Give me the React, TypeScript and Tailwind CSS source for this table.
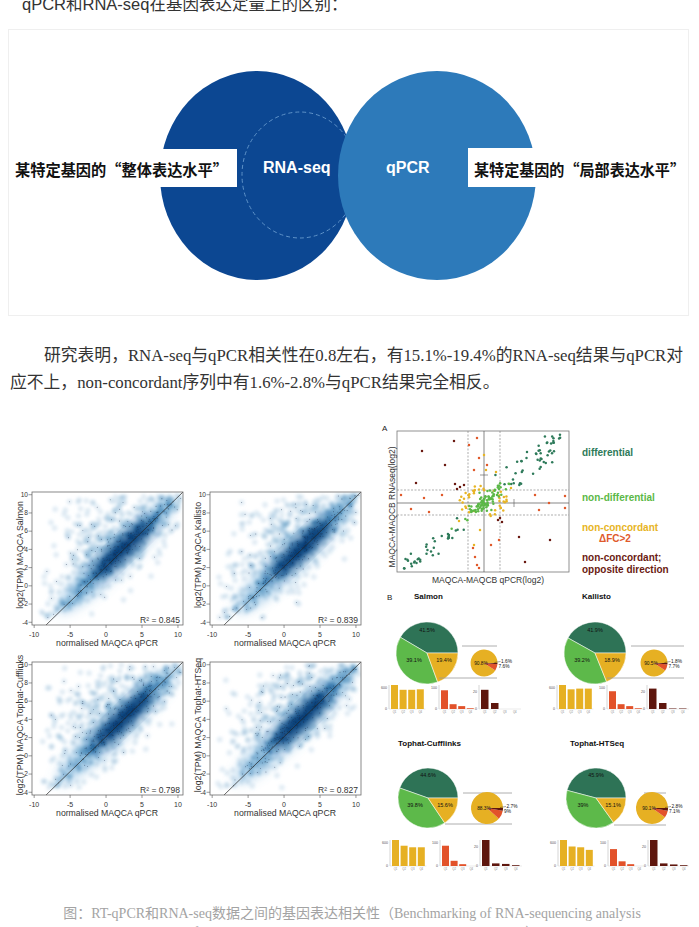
import React from 'react';

const SANS = "'Liberation Sans', Arial, sans-serif";
const CJK = "'Noto Sans CJK SC', sans-serif";

function rng(seed: number) {
  let s = seed >>> 0;
  return () => {
    s = (s + 0x6d2b79f5) >>> 0;
    let t = s;
    t = Math.imul(t ^ (t >>> 15), t | 1);
    t ^= t + Math.imul(t ^ (t >>> 7), t | 61);
    return ((t ^ (t >>> 14)) >>> 0) / 4294967296;
  };
}

function gauss(r: () => number) {
  const u = Math.max(r(), 1e-9);
  const v = r();
  return Math.sqrt(-2 * Math.log(u)) * Math.cos(2 * Math.PI * v);
}

// pie wedge, angles in degrees counter-clockwise from 3 o'clock
function wedge(cx: number, cy: number, r: number, a0: number, a1: number) {
  const k = Math.PI / 180;
  const x0 = cx + r * Math.cos(a0 * k);
  const y0 = cy - r * Math.sin(a0 * k);
  const x1 = cx + r * Math.cos(a1 * k);
  const y1 = cy - r * Math.sin(a1 * k);
  return `M${cx} ${cy}L${x0} ${y0}A${r} ${r} 0 ${a1 - a0 > 180 ? 1 : 0} 0 ${x1} ${y1}Z`;
}

function Diagram() {
  return (
    <svg width={679} height={285} viewBox="9 30 679 285" className="block">
      <ellipse cx={257} cy={175.5} rx={97} ry={104.5} fill="#0c4792" />
      <ellipse cx={300} cy={175} rx={58} ry={63} fill="none" stroke="#5f93c9" strokeWidth={1} strokeDasharray="4 3" />
      <ellipse cx={437} cy={175.5} rx={99} ry={104.5} fill="#2d7aba" />
      <rect x={9} y={149} width={228} height={38} fill="#ffffff" />
      <rect x={468} y={148} width={220} height={39} fill="#ffffff" />
      <text x={15} y={176} fontFamily={CJK} fontSize={15.6} fontWeight={700} fill="#111111" textLength={213} lengthAdjust="spacingAndGlyphs">
        某特定基因的“整体表达水平”
      </text>
      <text x={474} y={176} fontFamily={CJK} fontSize={15.6} fontWeight={700} fill="#111111" textLength={211} lengthAdjust="spacingAndGlyphs">
        某特定基因的“局部表达水平”
      </text>
      <text x={263} y={173} fontFamily={SANS} fontSize={16} fontWeight={700} fill="#ffffff">
        RNA-seq
      </text>
      <text x={386} y={173} fontFamily={SANS} fontSize={16} fontWeight={700} fill="#ffffff">
        qPCR
      </text>
    </svg>
  );
}

function DensityPlot({ id, ylabel, r2, seed }: { id: string; ylabel: string; r2: string; seed: number }) {
  const pts = React.useMemo(() => {
    const r = rng(seed);
    const out: [number, number][] = [];
    while (out.length < 1500) {
      const t = Math.min(1.02, Math.max(-0.02, 0.57 + gauss(r) * 0.2));
      let x = 35 + t * 138 + gauss(r) * 4.5;
      let y = 144 - t * 134 + gauss(r) * 4.5;
      const u = r();
      if (u < 0.24) {
        const s = Math.abs(gauss(r)) * 26;
        x -= s * 0.7;
        y -= s * 0.72;
      } else if (u < 0.34) {
        const s = Math.abs(gauss(r)) * 13;
        x += s * 0.7;
        y += s * 0.72;
      }
      if (y > 137) y = 130 + r() * 8;
      if (x < 30 || x > 171 || y < 15) continue;
      out.push([x, y]);
    }
    return out;
  }, [seed]);

  const yTicks = [10, 8, 6, 4, 2, 0, -2, -4];
  const xTicks = [-10, -5, 0, 5, 10];
  const py = (v: number) => 145 - ((v + 4.3) / 14.6) * 133;
  const px = (v: number) => 22 + ((v + 10.3) / 21) * 151;

  return (
    <svg width={178} height={170} className="block">
      <defs>
        <clipPath id={id}>
          <rect x={22} y={12} width={151} height={133} />
        </clipPath>
        <filter id={id + 'b'} x="-10%" y="-10%" width="120%" height="120%">
          <feGaussianBlur stdDeviation={1.2} />
        </filter>
        <filter id={id + 'c'} x="-50%" y="-50%" width="200%" height="200%">
          <feGaussianBlur stdDeviation={6} />
        </filter>
      </defs>
      <g clipPath={`url(#${id})`}>
        <g filter={`url(#${id}c)`} transform="translate(106 76) rotate(-44)">
          <ellipse cx={0} cy={0} rx={80} ry={15} fill="#5a9fd4" fillOpacity={0.5} />
        </g>
        <g filter={`url(#${id}b)`}>
          {pts.map((p, i) => (
            <circle key={'a' + i} cx={p[0]} cy={p[1]} r={4.2} fill="#bcd7ee" fillOpacity={0.1} />
          ))}
          {pts.map((p, i) => (
            <circle key={'b' + i} cx={p[0]} cy={p[1]} r={3} fill="#3182bd" fillOpacity={0.05} />
          ))}
          {pts.map((p, i) => (
            <circle key={'c' + i} cx={p[0]} cy={p[1]} r={2} fill="#08306b" fillOpacity={0.04} />
          ))}
        </g>
        <g filter={`url(#${id}c)`} transform="translate(113 69) rotate(-44)">
          <ellipse cx={0} cy={0} rx={40} ry={8} fill="#08306b" fillOpacity={0.8} />
        </g>
        {pts.filter((_, i) => i % 5 === 0).map((p, i) => (
          <circle key={'d' + i} cx={p[0]} cy={p[1]} r={0.45} fill="#1b2f4f" fillOpacity={0.75} />
        ))}
        <line x1={35} y1={146} x2={173} y2={12} stroke="#222222" strokeWidth={0.7} />
      </g>
      <rect x={22} y={12} width={151} height={133} fill="none" stroke="#6b6b6b" strokeWidth={0.8} />
      {yTicks.map(v => (
        <g key={v}>
          <line x1={18.5} x2={22} y1={py(v)} y2={py(v)} stroke="#555555" strokeWidth={0.6} />
          <text x={18} y={py(v) + 2.3} textAnchor="end" fontFamily={SANS} fontSize={6.6} fill="#333333">
            {v}
          </text>
        </g>
      ))}
      {xTicks.map(v => (
        <g key={v}>
          <line x1={px(v)} x2={px(v)} y1={145} y2={148} stroke="#555555" strokeWidth={0.6} />
          <text x={px(v)} y={156.5} textAnchor="middle" fontFamily={SANS} fontSize={7} fill="#333333">
            {v}
          </text>
        </g>
      ))}
      <text x={97} y={166} textAnchor="middle" fontFamily={SANS} fontSize={8.7} fill="#333333">
        normalised MAQCA qPCR
      </text>
      <text
        x={0}
        y={0}
        transform="translate(13 75) rotate(-90)"
        textAnchor="middle"
        fontFamily={SANS}
        fontSize={8.8}
        fill="#333333"
      >
        {ylabel}
      </text>
      <text x={170} y={143} textAnchor="end" fontFamily={SANS} fontSize={8.5} fill="#333333">
        {r2}
      </text>
    </svg>
  );
}

const ORANGE: [number, number][] = [
  [402, 495], [412, 509], [425, 498], [540, 510], [536, 495], [566, 496], [566, 508], [550, 503],
  [478, 438], [470, 445], [480, 458], [475, 470], [488, 465], [474, 548], [476, 557], [478, 565],
  [480, 568], [492, 545], [500, 540], [443, 495], [430, 512],
];
const BROWN: [number, number][] = [
  [423, 451], [455, 441], [446, 465], [417, 483], [456, 484], [461, 487], [465, 485], [458, 489],
  [499, 520], [503, 522], [501, 518], [520, 537], [551, 540], [526, 562],
];

function PanelA() {
  const groups = React.useMemo(() => {
    const r = rng(7);
    const diff: [number, number][] = [];
    for (let i = 0; i < 95; i++) {
      const up = i < 52;
      const t = (up ? 1 : -1) * (0.24 + r() * 0.78);
      const n = gauss(r) * (up ? 6 : 4.5);
      const x = 485 + t * 82 - n * 0.64;
      const y = 503 - t * 69 - n * 0.77;
      if (x < 401 || x > 567 || y < 434 || y > 569) continue;
      diff.push([x, y]);
    }
    const nd: [number, number][] = [];
    for (let i = 0; i < 85; i++) {
      const t = gauss(r) * 0.11;
      nd.push([486 + t * 82 + gauss(r) * 4, 502 - t * 69 + gauss(r) * 3.5]);
    }
    const yel: [number, number][] = [
      [485, 455], [487, 470], [475, 545], [481, 530], [460, 521], [497, 472], [512, 488],
    ];
    for (let i = 0; i < 42; i++) {
      const a = r() * Math.PI * 2;
      const rad = 0.75 + r() * 0.5;
      yel.push([485 + Math.cos(a) * 20 * rad, 502 + Math.sin(a) * 14 * rad]);
    }
    return { diff, nd, yel };
  }, []);

  return (
    <svg width={315} height={170} viewBox="375 415 315 170" className="block">
      <text x={383} y={431} fontFamily={SANS} fontSize={8} fill="#222222">A</text>
      <rect x={398} y={431} width={172} height={141} fill="none" stroke="#777777" strokeWidth={0.8} />
      <line x1={469} x2={469} y1={431} y2={572} stroke="#777777" strokeWidth={0.6} strokeDasharray="2 1.5" />
      <line x1={501} x2={501} y1={431} y2={572} stroke="#777777" strokeWidth={0.6} strokeDasharray="2 1.5" />
      <line x1={398} x2={570} y1={490} y2={490} stroke="#777777" strokeWidth={0.6} strokeDasharray="2 1.5" />
      <line x1={398} x2={570} y1={515} y2={515} stroke="#777777" strokeWidth={0.6} strokeDasharray="2 1.5" />
      <line x1={485} x2={485} y1={431} y2={572} stroke="#555555" strokeWidth={0.7} />
      <line x1={398} x2={570} y1={503} y2={503} stroke="#555555" strokeWidth={0.7} />
      <line x1={481} x2={489} y1={475} y2={475} stroke="#555555" strokeWidth={0.6} />
      <line x1={515} x2={515} y1={499} y2={507} stroke="#555555" strokeWidth={0.6} />
      {groups.diff.map((p, i) => (
        <circle key={'g' + i} cx={p[0]} cy={p[1]} r={1.25} fill="#2e7a5a" />
      ))}
      {groups.yel.map((p, i) => (
        <circle key={'y' + i} cx={p[0]} cy={p[1]} r={1.25} fill="#e7b424" />
      ))}
      {groups.nd.map((p, i) => (
        <circle key={'n' + i} cx={p[0]} cy={p[1]} r={1.25} fill="#5bb847" />
      ))}
      {ORANGE.map((p, i) => (
        <circle key={'o' + i} cx={p[0]} cy={p[1]} r={1.25} fill="#e05a2b" />
      ))}
      {BROWN.map((p, i) => (
        <circle key={'b' + i} cx={p[0]} cy={p[1]} r={1.25} fill="#6b1a12" />
      ))}
      <text
        transform="translate(395.5 507) rotate(-90)"
        textAnchor="middle"
        fontFamily={SANS}
        fontSize={8.5}
        fill="#333333"
      >
        MAQCA-MAQCB RNAseq(log2)
      </text>
      <text x={489} y={583} textAnchor="middle" fontFamily={SANS} fontSize={8.5} fill="#333333">
        MAQCA-MAQCB qPCR(log2)
      </text>
      <g fontFamily={SANS} fontSize={10} fontWeight={700}>
        <text x={583} y={455.5} fill="#2e7a5a">differential</text>
        <text x={583} y={500.5} fill="#5bb847">non-differential</text>
        <text x={583} y={531} fill="#e7b424">non-concordant</text>
        <text x={600} y={542} fill="#e05a2b">ΔFC&gt;2</text>
        <text x={583} y={561} fill="#6b1a12">non-concordant;</text>
        <text x={583} y={572.5} fill="#6b1a12">opposite direction</text>
      </g>
    </svg>
  );
}

type Group = {
  title: string;
  tx: number;
  ty: number;
  cx: number;
  cy: number;
  r: number;
  big: [number, number, number];
  small: [number, number, number];
  sx: number;
  sr: number;
  top: [number, number, number];
  bot: [number, number, number];
  barTop: number;
  barH: number;
  bars: [number[], number[], number[]];
};

const GROUPS: Group[] = [
  {
    title: 'Salmon', tx: 415, ty: 599, cx: 428, cy: 653, r: 31,
    big: [41.5, 39.1, 19.4], small: [90.8, 1.6, 7.6], sx: 485, sr: 13.5,
    top: [463, 498, 646], bot: [440, 498, 678], barTop: 685, barH: 24,
    bars: [[1, 0.8, 0.8, 0.82], [0.78, 0.2, 0.12, 0.03], [0.8, 0.25, 0, 0]],
  },
  {
    title: 'Kallisto', tx: 583, ty: 599, cx: 596, cy: 653, r: 31,
    big: [41.9, 39.2, 18.9], small: [90.5, 1.8, 7.7], sx: 655, sr: 13.5,
    top: [632, 685, 646], bot: [608, 685, 678], barTop: 685, barH: 24,
    bars: [[1, 0.82, 0.85, 0.85], [0.74, 0.2, 0.12, 0.03], [0.85, 0.25, 0.02, 0.02]],
  },
  {
    title: 'Tophat-Cufflinks', tx: 399, ty: 746, cx: 429, cy: 798, r: 30,
    big: [44.6, 39.8, 15.6], small: [88.3, 2.7, 9], sx: 488, sr: 16,
    top: [464, 513, 793], bot: [446, 513, 824], barTop: 840, barH: 26,
    bars: [[1, 0.78, 0.72, 0.72], [0.78, 0.2, 0.07, 0], [1, 0.1, 0.08, 0.03]],
  },
  {
    title: 'Tophat-HTSeq', tx: 571, ty: 746, cx: 597, cy: 798, r: 30,
    big: [45.9, 39, 15.1], small: [90.1, 2.8, 7.1], sx: 653, sr: 16,
    top: [645, 667, 793], bot: [615, 667, 825], barTop: 840, barH: 26,
    bars: [[1, 0.75, 0.72, 0.62], [0.65, 0.18, 0.07, 0], [1, 0.1, 0.06, 0.03]],
  },
];

const BAR_COLORS = ['#e6b023', '#e2522a', '#5e160d'];
const BAR_TICKS = ['600', '100', '20'];

function PieGroup({ g }: { g: Group }) {
  const [d, l] = g.big;
  const a1 = d * 3.6;
  const a2 = (d + l) * 3.6;
  const [, dark, red] = g.small;
  const sy = g.cy + 10;
  const fmt = (v: number) => `${v}%`;
  const charts = [g.cx - 38, g.cx + 12, g.cx + 52];
  const bottom = g.barTop + g.barH;
  return (
    <g fontFamily={SANS}>
      <text x={g.tx} y={g.ty} fontSize={8} fontWeight={700} fill="#111111">{g.title}</text>
      <path d={wedge(g.cx, g.cy, g.r, 0, a1)} fill="#2e7356" stroke="#ffffff" strokeWidth={0.5} />
      <path d={wedge(g.cx, g.cy, g.r, a1, a2)} fill="#5db94a" stroke="#ffffff" strokeWidth={0.5} />
      <path d={wedge(g.cx, g.cy, g.r, a2, 360)} fill="#e6b023" stroke="#ffffff" strokeWidth={0.5} />
      <text x={g.cx} y={g.cy - 21} textAnchor="middle" fontSize={5.5} fill="#111111">{fmt(g.big[0])}</text>
      <text x={g.cx - 13} y={g.cy + 9} textAnchor="middle" fontSize={5.5} fill="#111111">{fmt(g.big[1])}</text>
      <text x={g.cx + 17} y={g.cy + 9} textAnchor="middle" fontSize={5.5} fill="#111111">{fmt(g.big[2])}</text>
      <line x1={g.top[0]} x2={g.top[1]} y1={g.top[2]} y2={g.top[2]} stroke="#9a9a9a" strokeWidth={0.8} />
      <line x1={g.bot[0]} x2={g.bot[1]} y1={g.bot[2]} y2={g.bot[2]} stroke="#9a9a9a" strokeWidth={0.8} />
      <path d={wedge(g.sx, sy, g.sr, 0, 360 - (dark + red) * 3.6)} fill="#e6b023" />
      <path d={wedge(g.sx, sy, g.sr, 360 - (dark + red) * 3.6, 360 - dark * 3.6)} fill="#e2522a" />
      <path d={wedge(g.sx, sy, g.sr, 360 - dark * 3.6, 359.9)} fill="#5e160d" />
      <text x={g.sx - 3} y={sy + 1.5} textAnchor="middle" fontSize={4.8} fill="#111111">{fmt(g.small[0])}</text>
      <line x1={g.sx + g.sr - 3} x2={g.sx + g.sr + 3} y1={sy - 0.5} y2={sy - 1.5} stroke="#111111" strokeWidth={0.4} />
      <text x={g.sx + g.sr + 3.5} y={sy} fontSize={4.8} fill="#111111">{fmt(dark)}</text>
      <text x={g.sx + g.sr + 1} y={sy + 5} fontSize={4.8} fill="#111111">{fmt(red)}</text>
      {charts.map((ax, ci) => {
        const w = ci === 2 ? 7.5 : 7;
        const gap = ci === 2 ? 2.5 : 1.6;
        return (
          <g key={ci}>
            <line x1={ax} x2={ax} y1={g.barTop} y2={bottom} stroke="#aaaaaa" strokeWidth={0.5} />
            <line x1={ax} x2={ax + 4 * (w + gap) + 2} y1={bottom} y2={bottom} stroke="#cccccc" strokeWidth={0.4} />
            <text x={ax - 2} y={g.barTop + (ci === 2 ? 8 : 4)} textAnchor="end" fontSize={3.6} fill="#555555">
              {BAR_TICKS[ci]}
            </text>
            <text x={ax - 2} y={bottom + 1} textAnchor="end" fontSize={3.6} fill="#555555">0</text>
            {g.bars[ci].map((v, bi) => {
              const x = ax + 2 + bi * (w + gap);
              const h = v * g.barH;
              return (
                <g key={bi}>
                  <rect x={x} y={bottom - h} width={w} height={h} fill={BAR_COLORS[ci]} />
                  <text x={x + w / 2} y={bottom + 4} textAnchor="middle" fontSize={2.8} fill="#888888">
                    {'Q' + (bi + 1)}
                  </text>
                </g>
              );
            })}
          </g>
        );
      })}
    </g>
  );
}

function PanelB() {
  return (
    <svg width={315} height={295} viewBox="375 585 315 295" className="block">
      <text x={388} y={600} fontFamily={SANS} fontSize={8} fill="#222222">B</text>
      {GROUPS.map(g => (
        <PieGroup key={g.title} g={g} />
      ))}
    </svg>
  );
}

const PLOTS = [
  { id: 'p1', ylabel: 'log2(TPM) MAQCA Salmon', r2: 'R² = 0.845', seed: 11 },
  { id: 'p2', ylabel: 'log2(TPM) MAQCA Kallisto', r2: 'R² = 0.839', seed: 23 },
  { id: 'p3', ylabel: 'log2(TPM) MAQCA Tophat-Cufflinks', r2: 'R² = 0.798', seed: 37 },
  { id: 'p4', ylabel: 'log2(TPM) MAQCA Tophat-HTSeq', r2: 'R² = 0.827', seed: 51 },
];

export default function App() {
  return (
    <div className="w-full bg-white overflow-hidden">
      {/* 标题 */}
      <div className="-mt-[6px] pl-[22px] text-[16.5px] leading-[20px] text-[#333333] font-['Liberation_Sans','Noto_Sans_CJK_SC',sans-serif]">
        qPCR和RNA-seq在基因表达定量上的区别：
      </div>

      {/* 对比示意图 */}
      <div className="mt-[15px] ml-[8px] w-[681px] h-[287px] border border-[#efefef]">
        <Diagram />
      </div>

      {/* 正文 */}
      <p className="mt-[26px] px-[10px] text-[16.8px] leading-[27px] indent-[34px] text-[#333333] font-['Liberation_Serif','Noto_Sans_CJK_SC',serif]">
        研究表明，RNA-seq与qPCR相关性在0.8左右，有15.1%-19.4%的RNA-seq结果与qPCR对应不上，non-concordant序列中有1.6%-2.8%与qPCR结果完全相反。
      </p>

      {/* 图 */}
      <div className="mt-[19px] flex items-start px-[10px]">
        <div className="mt-[65px] grid w-[356px] grid-cols-2">
          {PLOTS.map(p => (
            <DensityPlot key={p.id} {...p} />
          ))}
        </div>
        <div className="ml-[9px] flex flex-col">
          <PanelA />
          <PanelB />
        </div>
      </div>

      {/* 图注 */}
      <p className="mt-[24px] ml-[34px] w-[636px] text-center text-[14px] leading-[19px] text-[#a3a3a3] font-['Liberation_Serif','Noto_Sans_CJK_SC',serif]">
        图：RT-qPCR和RNA-seq数据之间的基因表达相关性（Benchmarking of RNA-sequencing analysis workflows using whole-transcriptome RT-qPCR expression data）
      </p>
    </div>
  );
}
